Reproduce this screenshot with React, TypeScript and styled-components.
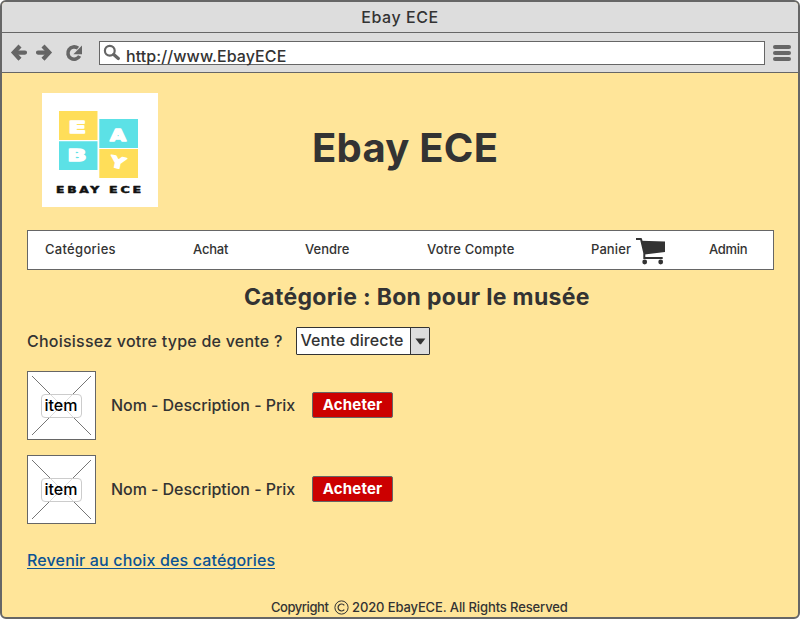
import React from 'react';
import styled, { createGlobalStyle } from 'styled-components';

const ink = '#333333';
const chrome = '#666666';

const GlobalStyle = createGlobalStyle`
  * { box-sizing: border-box; }
  body { margin: 0; background: #fff; }
`;

const Window = styled.div`
  width: 800px;
  height: 619px;
  border: 2px solid ${chrome};
  border-radius: 6px;
  background: #ffe599;
  overflow: hidden;
  display: flex;
  flex-direction: column;
  font-family: 'Inter', sans-serif;
  font-weight: 500;
  font-size: 16px;
  line-height: 20px;
  color: ${ink};
  white-space: nowrap;
`;

const TitleBar = styled.div`
  height: 31px;
  flex: none;
  padding: 5px 0 0 0;
  background: #ddd;
  border-bottom: 1px solid ${chrome};
  text-align: center;
  font-size: 16px;
  letter-spacing: 0.55px;
`;

const Toolbar = styled.div`
  height: 40px;
  flex: none;
  display: flex;
  padding: 8px 7px 0 8px;
  background: #ddd;
  border-bottom: 1px solid ${chrome};
`;

const NavButtons = styled.div`
  width: 89px;
  height: 24px;
  svg { display: block; }
`;

const AddressBar = styled.div`
  width: 666px;
  height: 24px;
  display: flex;
  background: #fff;
  border: 1px solid ${chrome};
  letter-spacing: 0.08px;
`;

const SearchSlot = styled.span`
  width: 17px;
  margin-left: 3px;
`;

const Url = styled.span`
  margin: 4px 0 0 6px;
`;

const MenuButton = styled.div`
  width: 18px;
  margin: 4px 0 0 8px;
  display: flex;
  flex-direction: column;
  gap: 2px;
`;

const MenuLine = styled.i`
  height: 4px;
  border-radius: 2px;
  background: ${chrome};
`;

const Page = styled.main`
  flex: 1;
  min-height: 0;
  padding: 20px 24px 0 25px;
`;

const Header = styled.header`
  display: flex;
  padding-left: 15px;
  height: 137px;
`;

const Brand = styled.h1`
  margin: 30px 0 0 154px;
  font-size: 40px;
  line-height: 50px;
  font-weight: 700;
  letter-spacing: 0.25px;
`;

const Nav = styled.nav`
  display: flex;
  width: 747px;
  height: 40px;
  padding: 8px 0 0 17px;
  background: #fff;
  border: 1px solid ${chrome};
  font-size: 13px;
`;

const NavItem = styled.a<{ $w: number; $track?: number }>`
  display: flex;
  width: ${(p) => p.$w}px;
  letter-spacing: ${(p) => p.$track ?? 0}px;
`;

const CartSlot = styled.span`
  height: 28px;
  margin: -2px 0 0 4px;
`;

const Heading = styled.h2`
  margin: 12px 0 0 217px;
  font-size: 23px;
  line-height: 30px;
  font-weight: 700;
  letter-spacing: 0.31px;
`;

const SaleType = styled.div`
  display: flex;
  height: 28px;
  margin-top: 15px;
`;

const SaleLabel = styled.label`
  width: 269px;
  padding-top: 4px;
  letter-spacing: 0.23px;
`;

const Select = styled.div`
  display: flex;
  width: 134px;
  border: 1px solid ${ink};
  border-radius: 1px;
  background: #fff;
  letter-spacing: 0.12px;
`;

const SelectValue = styled.span`
  flex: 1;
  padding: 2px 0 0 3.5px;
`;

const SelectArrow = styled.span`
  width: 19px;
  border-left: 1px solid ${ink};
  background: #ddd;
  svg { display: block; margin: 10px 0 0 4px; }
`;

const Items = styled.div`
  display: flex;
  flex-direction: column;
  gap: 15px;
  margin-top: 16px;
`;

const Item = styled.div`
  display: flex;
  height: 69px;
`;

const Thumb = styled.div`
  position: relative;
  width: 69px;
  border: 1px solid ${chrome};
  background: #fff;
  svg { display: block; }
`;

const ThumbLabel = styled.span`
  position: absolute;
  left: 13px;
  top: 22px;
  width: 41px;
  height: 24px;
  padding-right: 1px;
  border: 1px solid #ccc;
  border-radius: 4px;
  background: rgba(255, 255, 255, 0.75);
  color: #000;
  text-align: center;
`;

const ItemText = styled.span`
  width: 202px;
  padding: 24px 0 0 15px;
  letter-spacing: -0.05px;
`;

const BuyButton = styled.button`
  width: 81px;
  height: 26px;
  margin: 21px 0 0 14px;
  padding: 0 0 1px;
  border: 1px solid ${chrome};
  border-radius: 2px;
  background: #c00;
  color: #fff;
  font: 700 15px/20px 'Inter', sans-serif;
  letter-spacing: 0.2px;
`;

const BackLink = styled.a`
  display: block;
  width: 248px;
  height: 19px;
  margin-top: 26px;
  border-bottom: 1px solid #0b5394;
  color: #0b5394;
  letter-spacing: 0.15px;
`;

const Footer = styled.footer`
  display: flex;
  margin: 28px 0 0 244px;
  font-size: 13px;
  letter-spacing: -0.12px;
  svg { flex: none; margin: 3px 3px 0 6px; }
`;

const FooterWord = styled.span`
  width: 57px;
  letter-spacing: -0.45px;
`;

const Logo = () => (
  <svg width="116" height="114" viewBox="42 93 116 114">
    <path fill="#fff" d="M42 93h116v114H42z" />
    <path fill="#ffde59" d="M59 111h38.5v29H59zM99.3 149H138v29H99.3z" />
    <path fill="#5ce1e6" d="M99.3 119H138v29H99.3zM59 141.3h38.5V170H59z" />
    <g fill="#fff" stroke="#fff" strokeWidth="1.4" strokeLinejoin="round" fontFamily="DejaVu Sans" fontWeight="700" fontSize="15.5">
      <text x="68.5" y="132.7" textLength="17.5" lengthAdjust="spacingAndGlyphs">E</text>
      <text x="110" y="141" textLength="16" lengthAdjust="spacingAndGlyphs">A</text>
      <text x="67.5" y="161.4" textLength="19" lengthAdjust="spacingAndGlyphs">B</text>
      <text x="110.5" y="168" textLength="15" lengthAdjust="spacingAndGlyphs" transform="rotate(12 118 162)">Y</text>
    </g>
    <g fill="#111" stroke="#111" strokeWidth=".5" strokeLinejoin="round" fontFamily="DejaVu Sans" fontWeight="700" fontSize="9">
      <text x="56" y="193.3" textLength="46" lengthAdjust="spacingAndGlyphs" letterSpacing="2">EBAY</text>
      <text x="109" y="193.3" textLength="35" lengthAdjust="spacingAndGlyphs" letterSpacing="2">ECE</text>
    </g>
  </svg>
);

const Cart = () => (
  <svg width="32" height="28" viewBox="0 0 32 28">
    <path fill={ink} d="M6 3.8 30 4.4V15L9.5 17.6Z" />
    <path fill="none" stroke={ink} strokeWidth="2" strokeLinejoin="round" d="M1 2h5L9.3 16v4.2M8.3 21h19.4" />
    <circle cx="9.7" cy="25" r="2.4" fill={ink} />
    <circle cx="25.7" cy="25" r="2.4" fill={ink} />
  </svg>
);

const Search = () => (
  <svg width="17" height="22" viewBox="103 42 17 22">
    <g fill="none" stroke={chrome}>
      <circle cx="109.8" cy="50.7" r="4.9" strokeWidth="2.2" />
      <path d="m113.7 54.5 4.6 4" strokeWidth="3.2" strokeLinecap="round" />
    </g>
  </svg>
);

const BrowserIcons = () => (
  <svg width="80" height="24" viewBox="10 41 80 24">
    <g fill="none" stroke={chrome} strokeWidth="4.2">
      <path strokeLinecap="round" d="M15 52.6h10M38 52.6h10" />
      <path d="m20 46-6.2 6.6 6.2 6.6M43 46l6.2 6.6-6.2 6.6" />
      <path strokeWidth="3.6" d="M79.6 56A6.2 6.2 0 1 1 78 48.2" />
    </g>
    <path fill={chrome} d="M82 45.5v8.7h-8.6z" />
  </svg>
);

const items = ['first', 'second'];

export default function App() {
  return (
    <Window>
      <GlobalStyle />
      <TitleBar>Ebay ECE</TitleBar>
      <Toolbar>
        <NavButtons><BrowserIcons /></NavButtons>
        <AddressBar>
          <SearchSlot><Search /></SearchSlot>
          <Url>http://www.EbayECE</Url>
        </AddressBar>
        <MenuButton><MenuLine /><MenuLine /><MenuLine /></MenuButton>
      </Toolbar>
      <Page>
        <Header>
          <Logo />
          <Brand>Ebay ECE</Brand>
        </Header>
        <Nav>
          <NavItem $w={148} $track={0.3}>Catégories</NavItem>
          <NavItem $w={112} $track={-0.2}>Achat</NavItem>
          <NavItem $w={122}>Vendre</NavItem>
          <NavItem $w={164} $track={0.16}>Votre Compte</NavItem>
          <NavItem $w={118} $track={0.1}>Panier<CartSlot><Cart /></CartSlot></NavItem>
          <NavItem $w={50} $track={-0.3}>Admin</NavItem>
        </Nav>
        <Heading>Catégorie : Bon pour le musée</Heading>
        <SaleType>
          <SaleLabel>Choisissez votre type de vente ?</SaleLabel>
          <Select>
            <SelectValue>Vente directe</SelectValue>
            <SelectArrow>
              <svg width="11" height="7" viewBox="0 0 11 7"><path fill={ink} d="M.4.5h10L6 6.3H4.8z" /></svg>
            </SelectArrow>
          </Select>
        </SaleType>
        <Items>
          {items.map((id) => (
            <Item key={id}>
              <Thumb>
                <svg width="67" height="67" viewBox="0 0 67 67">
                  <path stroke={chrome} strokeWidth=".9" d="m4 4 59 59M63 4 4 63" />
                </svg>
                <ThumbLabel>item</ThumbLabel>
              </Thumb>
              <ItemText>Nom - Description - Prix</ItemText>
              <BuyButton>Acheter</BuyButton>
            </Item>
          ))}
        </Items>
        <BackLink>Revenir au choix des catégories</BackLink>
        <Footer>
          <FooterWord>Copyright</FooterWord>
          <svg width="15" height="15" viewBox="0 0 15 15" fill="none" stroke={ink}>
            <circle cx="7.5" cy="7.5" r="6.6" />
            <path strokeWidth="1.2" d="M10.3 5.3a3.5 3.5 0 1 0 0 4.4" />
          </svg>
          <span>2020 EbayECE. All Rights Reserved</span>
        </Footer>
      </Page>
    </Window>
  );
}
